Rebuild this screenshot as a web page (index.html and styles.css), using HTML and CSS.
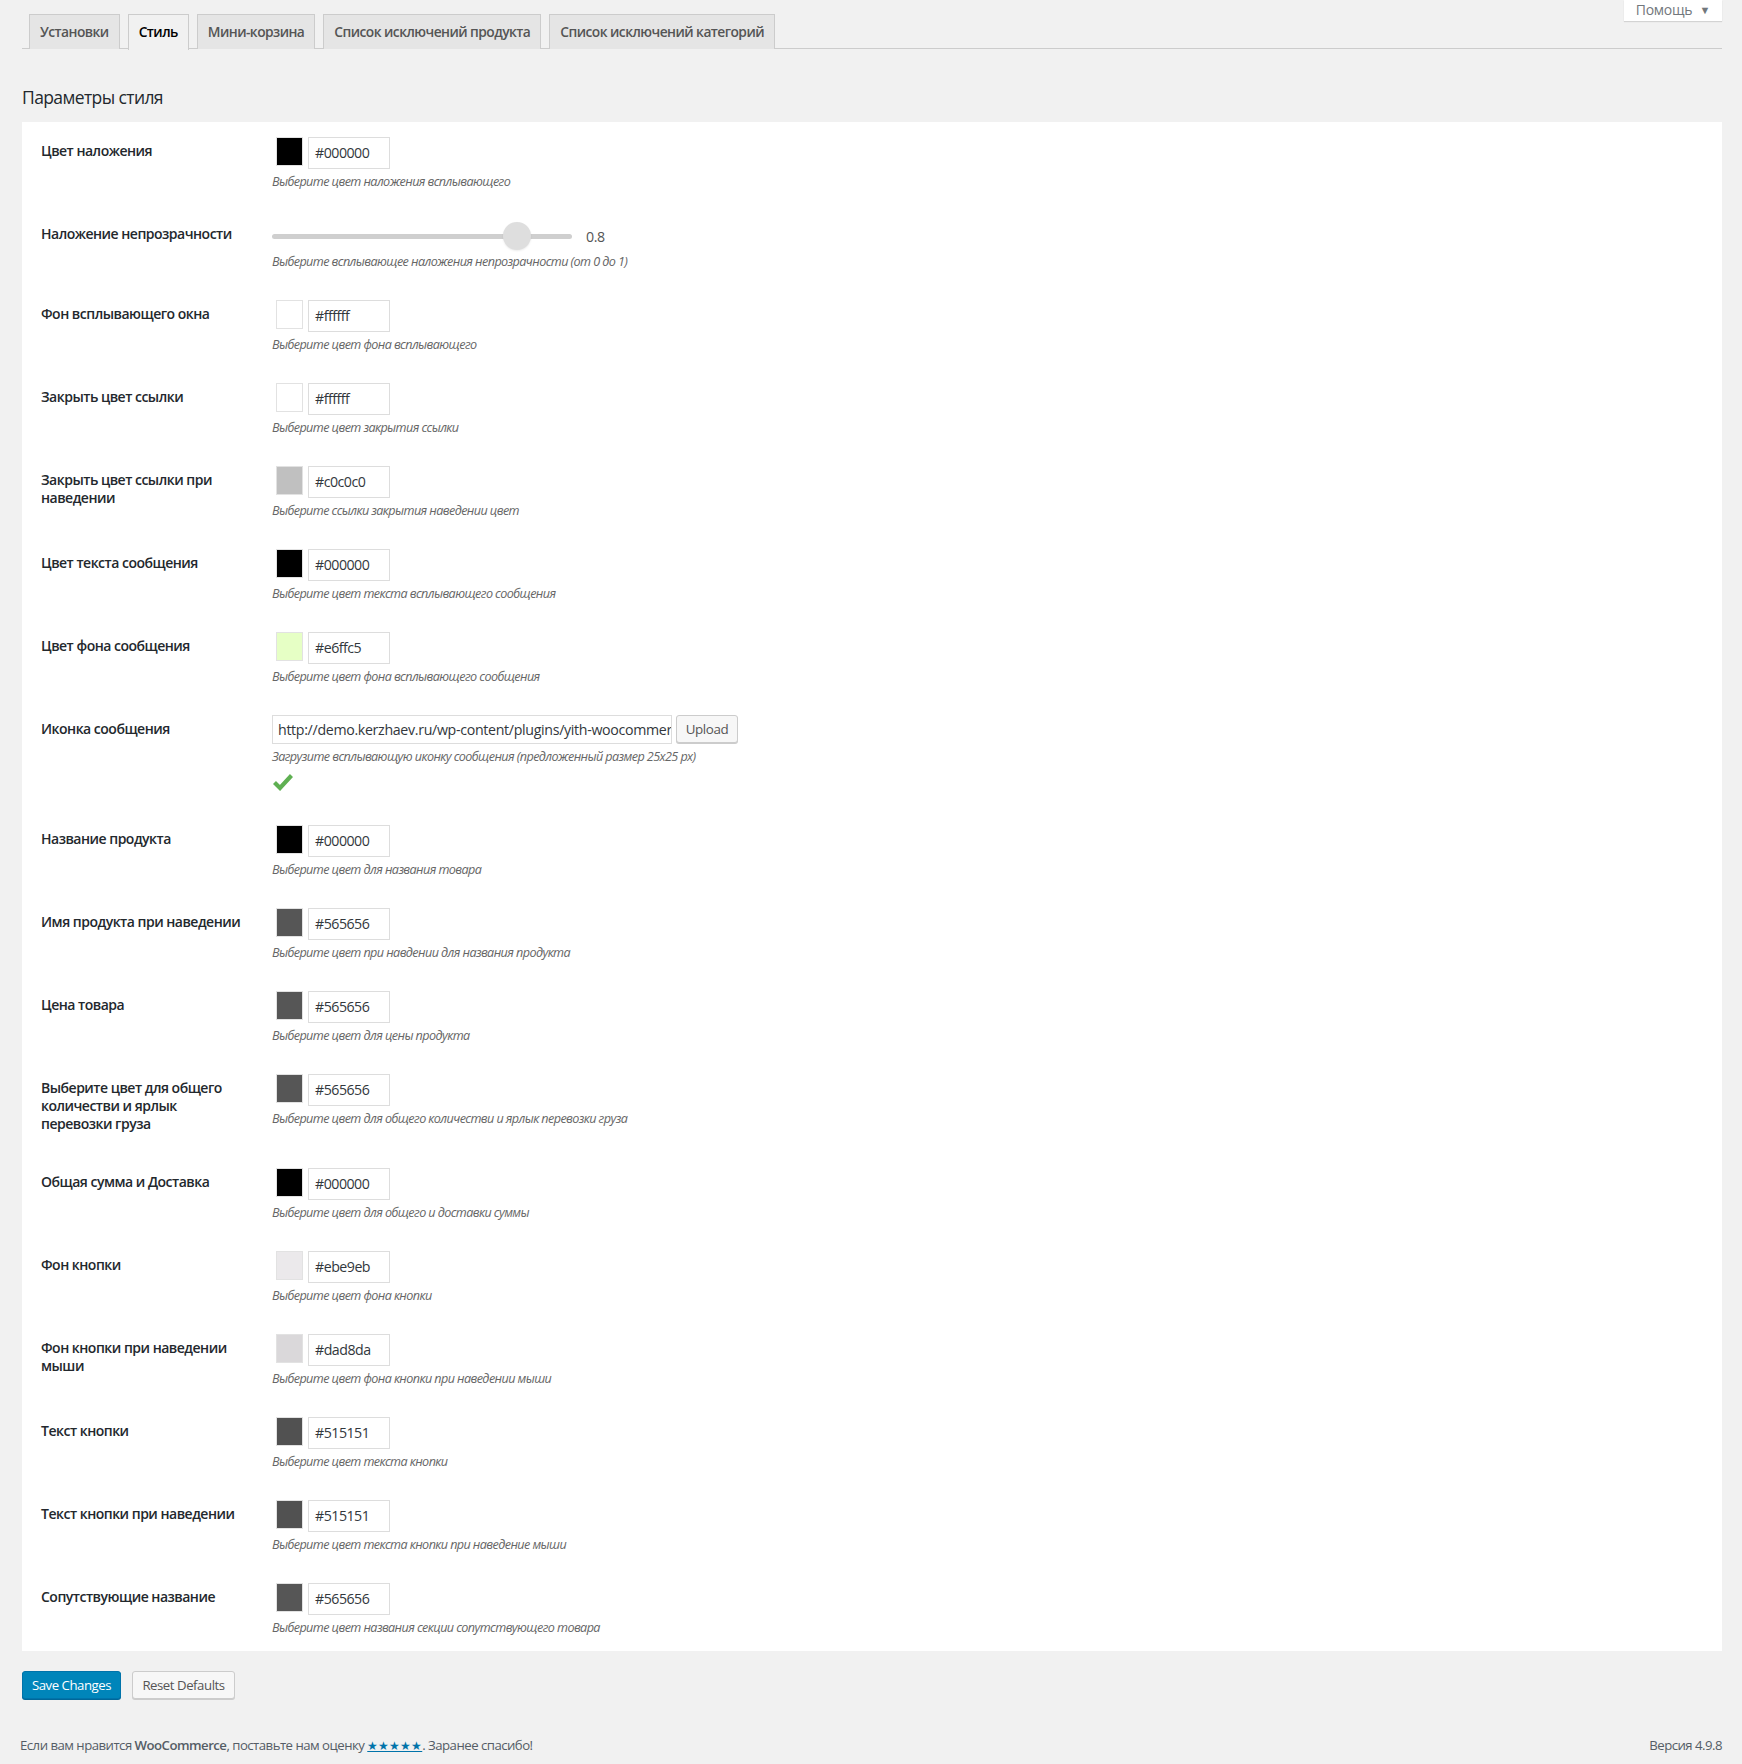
FILE: index.html
```html
<!DOCTYPE html>
<html lang="ru">
<head>
<meta charset="utf-8">
<title>Стиль</title>
<link rel="stylesheet" href="styles.css">
</head>
<body>
<div class="wrap">
  <button class="help-tab">Помощь <span class="help-arrow">▼</span></button>
  <nav class="nav-tabs">
    <a class="nav-tab">Установки</a>
    <a class="nav-tab active">Стиль</a>
    <a class="nav-tab">Мини-корзина</a>
    <a class="nav-tab">Список исключений продукта</a>
    <a class="nav-tab">Список исключений категорий</a>
  </nav>

  <h2 class="section-title">Параметры стиля</h2>

  <div class="panel">
    <div class="row">
      <div class="label">Цвет наложения</div>
      <div class="field">
        <div class="picker"><span class="swatch" style="background:#000000"></span><span class="hex">#000000</span></div>
        <p class="desc">Выберите цвет наложения всплывающего</p>
      </div>
    </div>

    <div class="row row-slider">
      <div class="label">Наложение непрозрачности</div>
      <div class="field">
        <div class="slider-line">
          <div class="slider"><div class="track"></div><div class="thumb" style="left:81.5%"></div></div>
          <span class="slider-value">0.8</span>
        </div>
        <p class="desc desc-slider">Выберите всплывающее наложения непрозрачности (от 0 до 1)</p>
      </div>
    </div>

    <div class="row">
      <div class="label">Фон всплывающего окна</div>
      <div class="field">
        <div class="picker"><span class="swatch" style="background:#ffffff"></span><span class="hex">#ffffff</span></div>
        <p class="desc">Выберите цвет фона всплывающего</p>
      </div>
    </div>

    <div class="row">
      <div class="label">Закрыть цвет ссылки</div>
      <div class="field">
        <div class="picker"><span class="swatch" style="background:#ffffff"></span><span class="hex">#ffffff</span></div>
        <p class="desc">Выберите цвет закрытия ссылки</p>
      </div>
    </div>

    <div class="row">
      <div class="label">Закрыть цвет ссылки при наведении</div>
      <div class="field">
        <div class="picker"><span class="swatch" style="background:#c0c0c0"></span><span class="hex">#c0c0c0</span></div>
        <p class="desc">Выберите ссылки закрытия наведении цвет</p>
      </div>
    </div>

    <div class="row">
      <div class="label">Цвет текста сообщения</div>
      <div class="field">
        <div class="picker"><span class="swatch" style="background:#000000"></span><span class="hex">#000000</span></div>
        <p class="desc">Выберите цвет текста всплывающего сообщения</p>
      </div>
    </div>

    <div class="row">
      <div class="label">Цвет фона сообщения</div>
      <div class="field">
        <div class="picker"><span class="swatch" style="background:#e6ffc5"></span><span class="hex">#e6ffc5</span></div>
        <p class="desc">Выберите цвет фона всплывающего сообщения</p>
      </div>
    </div>

    <div class="row">
      <div class="label">Иконка сообщения</div>
      <div class="field">
        <div class="upload-line">
          <span class="url-input">http://demo.kerzhaev.ru/wp-content/plugins/yith-woocommerce-added-to-cart-popup/assets/images/message-icon.png</span>
          <button class="upload-btn">Upload</button>
        </div>
        <p class="desc">Загрузите всплывающую иконку сообщения (предложенный размер 25x25 px)</p>
        <svg class="check" width="20" height="18" viewBox="0 0 20 18"><path d="M1.5 9.5 L7 15 L18.5 2.5" fill="none" stroke="#5fb052" stroke-width="4.2" stroke-linejoin="miter"/></svg>
      </div>
    </div>

    <div class="row">
      <div class="label">Название продукта</div>
      <div class="field">
        <div class="picker"><span class="swatch" style="background:#000000"></span><span class="hex">#000000</span></div>
        <p class="desc">Выберите цвет для названия товара</p>
      </div>
    </div>

    <div class="row">
      <div class="label">Имя продукта при наведении</div>
      <div class="field">
        <div class="picker"><span class="swatch" style="background:#565656"></span><span class="hex">#565656</span></div>
        <p class="desc">Выберите цвет при навдении для названия продукта</p>
      </div>
    </div>

    <div class="row">
      <div class="label">Цена товара</div>
      <div class="field">
        <div class="picker"><span class="swatch" style="background:#565656"></span><span class="hex">#565656</span></div>
        <p class="desc">Выберите цвет для цены продукта</p>
      </div>
    </div>

    <div class="row">
      <div class="label">Выберите цвет для общего количестви и ярлык перевозки груза</div>
      <div class="field">
        <div class="picker"><span class="swatch" style="background:#565656"></span><span class="hex">#565656</span></div>
        <p class="desc">Выберите цвет для общего количестви и ярлык перевозки груза</p>
      </div>
    </div>

    <div class="row">
      <div class="label">Общая сумма и Доставка</div>
      <div class="field">
        <div class="picker"><span class="swatch" style="background:#000000"></span><span class="hex">#000000</span></div>
        <p class="desc">Выберите цвет для общего и доставки суммы</p>
      </div>
    </div>

    <div class="row">
      <div class="label">Фон кнопки</div>
      <div class="field">
        <div class="picker"><span class="swatch" style="background:#ebe9eb"></span><span class="hex">#ebe9eb</span></div>
        <p class="desc">Выберите цвет фона кнопки</p>
      </div>
    </div>

    <div class="row">
      <div class="label">Фон кнопки при наведении мыши</div>
      <div class="field">
        <div class="picker"><span class="swatch" style="background:#dad8da"></span><span class="hex">#dad8da</span></div>
        <p class="desc">Выберите цвет фона кнопки при наведении мыши</p>
      </div>
    </div>

    <div class="row">
      <div class="label">Текст кнопки</div>
      <div class="field">
        <div class="picker"><span class="swatch" style="background:#515151"></span><span class="hex">#515151</span></div>
        <p class="desc">Выберите цвет текста кнопки</p>
      </div>
    </div>

    <div class="row">
      <div class="label">Текст кнопки при наведении</div>
      <div class="field">
        <div class="picker"><span class="swatch" style="background:#515151"></span><span class="hex">#515151</span></div>
        <p class="desc">Выберите цвет текста кнопки при наведение мыши</p>
      </div>
    </div>

    <div class="row">
      <div class="label">Сопутствующие название</div>
      <div class="field">
        <div class="picker"><span class="swatch" style="background:#565656"></span><span class="hex">#565656</span></div>
        <p class="desc">Выберите цвет названия секции сопутствующего товара</p>
      </div>
    </div>
  </div>

  <div class="actions">
    <button class="btn btn-primary">Save Changes</button>
    <button class="btn btn-secondary">Reset Defaults</button>
  </div>
</div>

<footer class="footer">
  <span>Если вам нравится <b>WooCommerce</b>, поставьте нам оценку <a class="stars">★★★★★</a>. Заранее спасибо!</span>
  <span>Версия 4.9.8</span>
</footer>
</body>
</html>
```

FILE: styles.css
```css
* { box-sizing: border-box; }

html, body {
  margin: 0;
  padding: 0;
  background: #f1f1f1;
}

body {
  font-family: "Open Sans", "Noto Sans", sans-serif;
  color: #23282d;
  font-size: 15px;
}

.wrap {
  position: relative;
  padding: 0 20px 0 22px;
}

.help-tab {
  position: absolute;
  top: 0;
  right: 20px;
  width: 98px;
  height: 21px;
  border: 0;
  background: #fff;
  box-shadow: 0 1px 1px rgba(0,0,0,0.12);
  font-family: inherit;
  font-size: 14px;
  letter-spacing: -0.3px;
  color: #72777c;
  padding: 0 0 2px 0;
  line-height: 19px;
}
.help-arrow { font-size: 11px; margin-left: 4px; vertical-align: 1px; }

.nav-tabs {
  display: flex;
  gap: 8px;
  padding: 14px 0 0 7px;
  border-bottom: 1px solid #ccc;
  height: 49px;
}

.nav-tab {
  display: block;
  height: 35px;
  padding: 5px 10px 0;
  border: 1px solid #ccc;
  border-bottom: 0;
  background: #e5e5e5;
  color: #555;
  font-size: 13.8px;
  font-weight: 600;
  line-height: 24px;
  letter-spacing: -0.55px;
  white-space: nowrap;
}
.nav-tab.active {
  background: #f1f1f1;
  color: #000;
  height: 36px;
}

.section-title {
  margin: 0;
  padding-top: 35px;
  height: 73px;
  font-size: 17.5px;
  font-weight: 400;
  line-height: 26px;
  letter-spacing: -0.6px;
  color: #23282d;
}

.panel {
  background: #fff;
}

.row {
  display: grid;
  grid-template-columns: 250px 1fr;
  min-height: 83px;
}
.row-slider {
  min-height: 0;
}

.label {
  padding: 20px 29px 20px 19px;
  font-size: 14px;
  font-weight: 600;
  line-height: 18px;
  letter-spacing: -0.5px;
  color: #23282d;
}

.field {
  padding: 15px 0 14px 0;
}

.picker {
  display: flex;
  align-items: flex-start;
  gap: 5px;
  height: 32px;
  padding-left: 4px;
}
.swatch {
  width: 27px;
  height: 29px;
  border: 1px solid #e2e2e2;
}
.hex {
  width: 82px;
  height: 32px;
  border: 1px solid #ddd;
  background: #fff;
  font-size: 14.2px;
  line-height: 30px;
  padding-left: 6px;
  letter-spacing: -0.5px;
  color: #32373c;
}

.desc {
  margin: 4px 0 0;
  font-size: 12.6px;
  font-style: italic;
  line-height: 18px;
  color: #666;
  letter-spacing: -0.58px;
}
.desc-slider {
  margin-top: 3px;
}

.slider-line {
  display: flex;
  align-items: center;
  height: 28px;
  margin-top: 2px;
}
.slider {
  position: relative;
  width: 300px;
  height: 28px;
}
.track {
  position: absolute;
  left: 0;
  right: 0;
  top: 12px;
  height: 5px;
  border-radius: 3px;
  background: #cfcfcf;
}
.thumb {
  position: absolute;
  top: 0;
  width: 28px;
  height: 28px;
  margin-left: -14px;
  border-radius: 50%;
  background: #dedede;
  box-shadow: 0 1px 2px rgba(0,0,0,0.08);
}
.slider-value {
  margin-left: 14px;
  font-size: 14.2px;
  letter-spacing: -0.4px;
  color: #555;
}

.upload-line {
  display: flex;
  gap: 4px;
  height: 29px;
}
.url-input {
  display: block;
  width: 400px;
  height: 29px;
  border: 1px solid #ddd;
  padding: 0 5px;
  overflow: hidden;
  white-space: nowrap;
  font-size: 14.2px;
  line-height: 27px;
  letter-spacing: -0.32px;
  color: #32373c;
}
.upload-btn {
  height: 28px;
  width: 62px;
  padding: 0;
  border: 1px solid #ccc;
  border-radius: 3px;
  background: #f7f7f7;
  box-shadow: 0 1px 0 #ccc;
  font-family: inherit;
  font-size: 13.4px;
  letter-spacing: -0.4px;
  color: #555;
}
.check {
  display: block;
  margin: 7px 0 5px 1px;
}

.actions {
  display: flex;
  gap: 11px;
  padding-top: 20px;
  height: 84px;
}
.btn {
  height: 28px;
  padding: 0;
  border-radius: 3px;
  font-family: inherit;
  font-size: 13.2px;
  letter-spacing: -0.45px;
  line-height: 26px;
  white-space: nowrap;
  text-align: center;
}
.btn-primary {
  width: 99px;
  background: #0085ba;
  border: 1px solid #0073aa;
  box-shadow: 0 1px 0 #006799;
  color: #fff;
}
.btn-secondary {
  width: 103px;
  background: #f7f7f7;
  border: 1px solid #ccc;
  box-shadow: 0 1px 0 #ccc;
  color: #555;
}

.footer {
  display: flex;
  justify-content: space-between;
  padding: 0 20px 0 20px;
  font-size: 13.2px;
  color: #555d66;
  letter-spacing: -0.52px;
  line-height: 20px;
}
.footer b { font-weight: 600; }
.stars {
  color: #0073aa;
  text-decoration: underline;
  letter-spacing: 0;
  font-size: 12px;
}
```
